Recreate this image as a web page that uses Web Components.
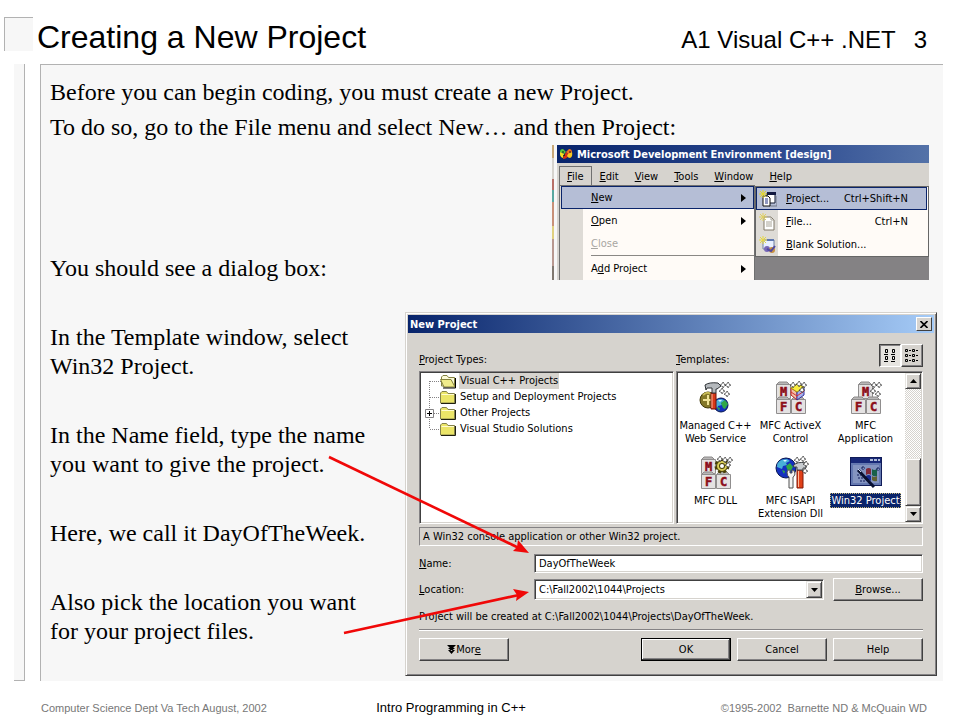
<!DOCTYPE html>
<html lang="en">
<head>
<meta charset="utf-8">
<title>Creating a New Project</title>
<style>
  body {
    margin: 0;
    background: #fff;
    color: #000;
    font-family: "Liberation Sans", Arial, sans-serif;
  }
</style>
</head>
<body>

<lecture-slide>
  <h1 slot="title">Creating a New Project</h1>
  <span slot="course">A1 Visual C++ .NET</span>
  <span slot="number">3</span>

  <p slot="intro">Before you can begin coding, you must create a new Project.</p>
  <p slot="intro">To do so, go to the File menu and select New… and then Project:</p>

  <p slot="steps">You should see a dialog box:</p>
  <p slot="steps">In the Template window, select Win32 Project.</p>
  <p slot="steps">In the Name field, type the name you want to give the project.</p>
  <p slot="steps">Here, we call it DayOfTheWeek.</p>
  <p slot="steps">Also pick the location you want for your project files.</p>

  <ide-menu slot="figures"></ide-menu>
  <project-dialog slot="figures"></project-dialog>

  <span slot="foot-left">Computer Science Dept Va Tech August, 2002</span>
  <span slot="foot-center">Intro Programming in C++</span>
  <span slot="foot-right">©1995-2002&nbsp; Barnette ND &amp; McQuain WD</span>
</lecture-slide>

<script>
/* Slide frame: header, side rail, body panel, footer. */
class LectureSlide extends HTMLElement {
  constructor() {
    super();
    this.attachShadow({ mode: 'open' });
    this.shadowRoot.innerHTML = `<style>
  :host {
    display: grid;
    grid-template-rows: 64px 1fr 39px;
    min-height: 100vh;
  }

/* Header */
  header {
    display: flex;
    align-items: baseline;
    padding: 17px 33px 0 4px;
    font-size: 24px;
  }
  .corner {
    align-self: flex-start;
    box-sizing: border-box;
    width: 29px;
    height: 34px;
    margin-right: 4px;
    background: #f7f7f7;
    border: 1px solid #b2b2b2;
    border-right: none;
    border-bottom: none;
  }
  ::slotted(h1) {
    flex: 1;
    margin: 0;
    font-size: 32px;
    line-height: 40px;
    font-weight: 400;
  }
  .number {
    margin-left: 18px;
  }

/* Body */
  .content {
    display: flex;
    gap: 15px;
    padding: 0 17px 0 14px;
  }
  .rail {
    box-sizing: border-box;
    width: 11px;
    background: #f7f7f7;
    border: 1px solid #b2b2b2;
    border-top: none;
    border-left: none;
  }
  .panel {
    flex: 1;
    position: relative;
    padding: 13px 6px 4px 9px;
    background: #f7f7f7;
    border: 1px solid #b2b2b2;
    border-right: none;
    border-bottom: none;
    font: 24px/29px "Liberation Serif", "Times New Roman", serif;
  }
  ::slotted(p) {
    margin: 0;
  }
  .intro {
    display: grid;
    gap: 6px;
  }
  .columns {
    display: grid;
    grid-template-columns: minmax(0, 1fr) auto;
    gap: 30px;
  }
  .steps {
    display: flex;
    flex-direction: column;
    gap: 40px;
    padding-top: 112px;
  }
  .figures {
    display: flex;
    flex-direction: column;
    align-items: flex-end;
    gap: 32px;
    padding-top: 3px;
  }

/* Arrows drawn over the text and the dialog. */
  .arrows {
    position: absolute;
    inset: 0;
    width: 100%;
    height: 100%;
    pointer-events: none;
  }
  .arrows line {
    stroke: #f00808;
    stroke-width: 2.6;
  }
  .arrows path {
    fill: #f00808;
  }

/* Footer */
  footer {
    display: grid;
    grid-template-columns: 8fr auto 9fr;
    align-items: center;
    padding: 14px 33px 0 41px;
    font-size: 11px;
    color: #777;
  }
  .center {
    padding-right: 24px;
    font-size: 13px;
    color: #000;
  }
  .right {
    text-align: right;
  }
</style>

<header>
  <div class="corner"></div>
  <slot name="title"></slot>
  <slot name="course"></slot>
  <div class="number"><slot name="number"></slot></div>
</header>

<div class="content">
  <div class="rail"></div>
  <main class="panel">
    <div class="intro"><slot name="intro"></slot></div>
    <div class="columns">
      <div class="steps"><slot name="steps"></slot></div>
      <div class="figures"><slot name="figures"></slot></div>
    </div>
    <svg class="arrows" aria-hidden="true">
      <line x1="288" y1="392" x2="478" y2="483"/>
      <path d="M488 488 L472 486 L476 482 L477 475 Z"/>
      <line x1="303" y1="568" x2="478" y2="530"/>
      <path d="M488 527 L472 524 L476 530 L475 536 Z"/>
    </svg>
  </main>
</div>

<footer>
  <div><slot name="foot-left"></slot></div>
  <div class="center"><slot name="foot-center"></slot></div>
  <div class="right"><slot name="foot-right"></slot></div>
</footer>
`;
  }
}
customElements.define('lecture-slide', LectureSlide);

/* One row of a drop-down menu. Attributes: active, disabled, submenu, shortcut. */
class MenuRow extends HTMLElement {
  constructor() {
    super();
    this.attachShadow({ mode: 'open' });
    const shortcut = this.getAttribute('shortcut') || '';
    const off = this.hasAttribute('disabled') ? 'disabled' : '';
    const arrow = this.hasAttribute('submenu')
      ? '<svg width="5" height="8" viewBox="0 0 5 8"><path d="M0 0 L5 4 L0 8 Z"/></svg>'
      : '';
    this.shadowRoot.innerHTML = `<style>
  :host {
    display: block;
  }
  button {
    display: grid;
    grid-template-columns: 22px 1fr auto;
    align-items: center;
    box-sizing: border-box;
    width: 100%;
    height: 23px;
    padding: 0 7px 0 0;
    border: 1px solid transparent;
    background: linear-gradient(to right, #dedbd6 22px, #fffbf7 22px) border-box;
    color: #000;
    font: inherit;
    text-align: left;
  }
  button:disabled {
    color: #a8a6a2;
  }
  :host([active]) button {
    background: #b5bed6;
    border-color: #0a246a;
  }
  .icon {
    display: grid;
    place-items: center;
  }
  .text {
    padding-left: 7px;
  }
  .shortcut {
    padding-right: 11px;
  }
</style>
<button type="button" ${off}>
  <span class="icon"><slot name="icon"></slot></span>
  <span class="text"><slot></slot></span>
  ${shortcut ? `<span class="shortcut">${shortcut}</span>` : arrow}
</button>`;
  }
}
customElements.define('menu-row', MenuRow);

/* Development environment window with File > New opened. */
class IdeMenu extends HTMLElement {
  constructor() {
    super();
    this.attachShadow({ mode: 'open' });
    this.shadowRoot.innerHTML = `<style>
  :host {
    display: flex;
    width: 377px;
    height: 135px;
    margin-right: 8px;
    overflow: hidden;
    font: 11px/13px "DejaVu Sans Condensed", Tahoma, sans-serif;
  }
  .edge {
    width: 2px;
    margin-right: 3px;
    background: linear-gradient(#c8a878 0 10%, #d6d3ce 10% 25%, #b87068 25% 33%, #58a8a0 33% 42%,
      #c89078 42% 60%, #e0d080 60% 70%, #b89890 70% 90%, #807870 90%);
  }
  .window {
    flex: 1;
    display: flex;
    flex-direction: column;
    background: #d6d3ce;
  }
  .title {
    display: flex;
    align-items: center;
    gap: 4px;
    height: 18px;
    padding-left: 2px;
    background: linear-gradient(to right, #08246b, #2c4a90 60%, #5472a8);
    color: #fff;
    font-weight: 700;
  }
  nav {
    display: flex;
    height: 22px;
    padding: 3px 0 0 2px;
    box-sizing: border-box;
  }
  nav button {
    padding: 0 7px;
    border: 1px solid transparent;
    border-bottom: none;
    background: none;
    font: inherit;
  }
  nav .open {
    border-color: #707070;
  }
  .area {
    flex: 1;
    display: flex;
    align-items: stretch;
    min-height: 0;
    padding-left: 2px;
  }
  .menu {
    box-sizing: border-box;
    width: 196px;
    border: 1px solid #707070;
    border-bottom: none;
    padding-left: 1px;
    background: linear-gradient(to right, #dedbd6 23px, #fffbf7 23px);
  }
  .rule {
    height: 1px;
    margin: 0 0 1px 30px;
    background: #8a8885;
  }
  .workspace {
    flex: 1;
    padding-top: 1px;
    background: linear-gradient(#d6d3ce 1px, #848284 1px);
  }
  .submenu {
    border: 1px solid #666;
    padding-right: 1px;
    background: #fffbf7;
  }
</style>

<div class="edge"></div>
<div class="window">
  <div class="title">
    <svg width="14" height="12" viewBox="0 0 14 12">
      <path d="M1 4 Q1 1 4 1 L7 4 L5 6 Z" fill="#58c838"/>
      <path d="M7 4 L10 1 Q13 1 13 4 L10 7 Z" fill="#f07020"/>
      <path d="M1 4 L5 6 L4 10 Q1 9 1 6 Z" fill="#f8e020"/>
      <path d="M4 10 L7 4 L10 7 Q8 11 4 11 Z" fill="#d83010"/>
      <path d="M9 6 L13 4 Q14 9 11 10 Q9 10 8 8 Z" fill="#f8c820"/>
      <path d="M3 4 H5 M10 4 H12 M4 8 L6 7" stroke="#181818"/>
    </svg>
    <span>Microsoft Development Environment [design]</span>
  </div>
  <nav>
    <button type="button" class="open"><u>F</u>ile</button>
    <button type="button"><u>E</u>dit</button>
    <button type="button"><u>V</u>iew</button>
    <button type="button"><u>T</u>ools</button>
    <button type="button"><u>W</u>indow</button>
    <button type="button"><u>H</u>elp</button>
  </nav>
  <div class="area">
    <div class="menu">
      <menu-row active submenu><u>N</u>ew</menu-row>
      <menu-row submenu><u>O</u>pen</menu-row>
      <menu-row disabled><u>C</u>lose</menu-row>
      <div class="rule"></div>
      <menu-row submenu>A<u>d</u>d Project</menu-row>
    </div>
    <div class="workspace">
      <div class="submenu">
        <menu-row active shortcut="Ctrl+Shift+N">
          <svg slot="icon" width="18" height="18" viewBox="0 0 18 18">
            <path d="M8 3 H16 V13 H8 Z" fill="#fff" stroke="#101830"/>
            <path d="M8 2 H17 V5 H8 Z" fill="#101840"/>
            <path d="M10 16 H18 V6" fill="none" stroke="#707888"/>
            <path d="M4 6 H9 L11 8 V16 H4 Z" fill="#fff" stroke="#101010"/>
            <path d="M6 9 H9 M6 11 H9 M6 13 H9" stroke="#203080"/>
            <path d="M4 0 V8 M0 4 H8 M1 1 L7 7 M7 1 L1 7" stroke="#e8d820"/>
          </svg><u>P</u>roject...</menu-row>
        <menu-row shortcut="Ctrl+N">
          <svg slot="icon" width="18" height="18" viewBox="0 0 18 18">
            <path d="M5 4 H12 L15 7 V17 H5 Z" fill="#fff" stroke="#807868"/>
            <path d="M12 4 V7 H15 M7 9 H13 M7 11 H13 M7 13 H13" fill="none" stroke="#a8a498"/>
            <path d="M4 0 V8 M0 4 H8 M1 1 L7 7 M7 1 L1 7" stroke="#e0d060"/>
          </svg><u>F</u>ile...</menu-row>
        <menu-row>
          <svg slot="icon" width="18" height="18" viewBox="0 0 18 18">
            <path d="M4 4 H15 V13 H4 Z" fill="#e8f0ff" stroke="#7080a0"/>
            <path d="M8 3 H15 V5 H8 Z" fill="#6078b0"/>
            <circle cx="8" cy="13" r="3" fill="#7868b8"/>
            <circle cx="13" cy="14" r="3" fill="#c89040"/>
            <path d="M8 13 L12 15 L16 10" fill="none" stroke="#5048a0" stroke-width="2"/>
            <path d="M4 0 V8 M0 4 H8 M1 1 L7 7 M7 1 L1 7" stroke="#e8d840"/>
          </svg><u>B</u>lank Solution...</menu-row>
      </div>
    </div>
  </div>
</div>`;
  }
}
customElements.define('ide-menu', IdeMenu);

/* Raised push button. */
class PushButton extends HTMLElement {
  constructor() {
    super();
    this.attachShadow({ mode: 'open' });
    this.shadowRoot.innerHTML = `<style>
  :host {
    display: block;
    width: 90px;
  }
  button {
    display: flex;
    align-items: center;
    justify-content: center;
    box-sizing: border-box;
    width: 100%;
    height: 23px;
    padding: 0;
    border: 1px solid;
    border-color: #fff #404040 #404040 #fff;
    box-shadow: inset -1px -1px #848284;
    background: #d6d3ce;
    color: #000;
    font: inherit;
  }
  :host([default]) button {
    border-color: #000;
    box-shadow: inset -1px -1px #404040, inset 1px 1px #fff, inset -2px -2px #848284;
  }
</style>
<button type="button"><slot></slot></button>`;
  }
}
customElements.define('push-button', PushButton);

/* Entry of the project types tree. Attributes: first, last, selected, expandable. */
class TreeEntry extends HTMLElement {
  constructor() {
    super();
    this.attachShadow({ mode: 'open' });
    const open = this.hasAttribute('selected');
    const top = this.hasAttribute('first') ? 8 : 0;
    const bottom = this.hasAttribute('last') ? 8 : 16;
    const box = this.hasAttribute('expandable')
      ? '<path d="M4.5 4.5 h8 v8 h-8 Z" fill="#fff" stroke="#848284"/><path d="M6 8.5 H11 M8.5 6 V11" stroke="#000"/>'
      : '';
    const folder = open
      ? '<path d="M20.5 13 V4 L22 2.5 H26 L27.5 4.5 H33.5 V13 Z" fill="#fbfad8" stroke="#848240"/><path d="M19.5 6.5 H30 L34 14 H23 Z" fill="#f0ec8c" stroke="#84823c"/><path d="M22 15 H34.5 V5" fill="none" stroke="#000"/>'
      : '<path d="M19.5 14 V4 L21 2.5 H25.5 L27 4.5 H33.5 V14 Z" fill="#ebe568" stroke="#84824c"/><path d="M20.5 5.5 H33" stroke="#fffcd0"/><path d="M20 14.5 H34.5 V5" fill="none" stroke="#202010"/>';
    this.shadowRoot.innerHTML = `<style>
  :host {
    display: flex;
    height: 16px;
  }
  span {
    padding: 1px 1px 2px;
  }
  :host([selected]) span {
    background: #d6d3ce;
  }
</style>
<svg width="38" height="16" viewBox="0 0 38 16" aria-hidden="true">
  <path d="M8.5 ${top} V${bottom} M9 8.5 H20" stroke="#848284" stroke-dasharray="1 1"/>
  ${box}${folder}
</svg><span><slot></slot></span>`;
  }
}
customElements.define('tree-entry', TreeEntry);

/* Pictures of the template list, 32 by 32. */
const star = (x, y) => `
  <path d="M${x} ${y - 3} L${x + 1} ${y - 1} L${x + 3} ${y} L${x + 1} ${y + 1} L${x} ${y + 3} L${x - 1} ${y + 1} L${x - 3} ${y} L${x - 1} ${y - 1} Z"
    fill="#fff" stroke="#181818" stroke-width=".8" stroke-dasharray="1.4 .6"/>`;
const sparkles = (x, y) => star(x + 2, y + 3) + star(x + 7, y + 3) + star(x + 1, y + 9) + star(x + 6, y + 12);

/* Lettered cube. */
const cube = (x, y, letter) => `
  <path d="M${x} ${y + 2} l3 -3 h8 l3 3 Z" fill="#b8b6b6" stroke="#8c8a8a"/>
  <path d="M${x + 0.5} ${y + 1.5} h14 v14 h-14 Z" fill="#e4e2e2" stroke="#908e8e"/>
  <text x="${x + 7.5}" y="${y + 13}" text-anchor="middle" font-size="12" font-weight="700"
    font-family="DejaVu Sans Mono, monospace" fill="#8c0c18" stroke="#8c0c18" stroke-width=".5">${letter}</text>`;

const globe = (x, y, r) => `
  <circle cx="${x}" cy="${y}" r="${r}" fill="#1430c0" stroke="#081850"/>
  <path d="M${x - r + 1} ${y - 1} q0 -${r - 2} ${r} -${r - 2} l3 2 l-4 2 l1 2 l-4 1 l-1 3 Z" fill="#48b0d8"/>
  <path d="M${x} ${y - 2} l4 -3 l3 4 l-3 5 l-2 -1 Z M${x - 4} ${y + 2} l3 1 l-1 3 Z" fill="#30a848"/>
  <path d="M${x - 3} ${y - r + 2} l4 0 l-2 2 Z" fill="#d8f4ff"/>`;

const PICTURES = {
  managed: `
    <circle cx="8" cy="18" r="8" fill="#847828" stroke="#403808"/>
    <path d="M3 13 q4 -4 8 -1" fill="none" stroke="#c8bc58" stroke-width="2"/>
    <path d="M8 13 V23 M3 18 H13" stroke="#f0e498" stroke-width="2"/>
    ${globe(21, 23, 7)}
    <path d="M11 11 h5 v16 h-5 Z" fill="#d83818" stroke="#701008"/>
    <path d="M12 12 v14" stroke="#ffb898"/>
    <path d="M5 3 Q9 0 18 1 L21 4 L17 7 H16 V11 H12 V6 H7 L6 8 Z" fill="#b4b8bc" stroke="#303438"/>
    ${sparkles(21, 0)}`,
  activex: `${cube(1, 1, 'M')}${cube(1, 16, 'F')}${cube(16, 16, 'C')}
    <path d="M16 6 L22 10 V18 L16 13 Z" fill="#f0c0a8" stroke="#c02020"/>
    <path d="M22 10 L29 5 V13 L22 18 Z" fill="#a8b0e8" stroke="#3030a0"/>
    <path d="M16 6 L22 2 L29 5 L22 10 Z" fill="#f8ec40" stroke="#a89810"/>
    <path d="M16 10 L22 14 L29 9" fill="none" stroke="#d83030"/>
    ${star(18, 3)}${star(24, 2)}${star(29, 3)}${star(27, 8)}`,
  application: `${cube(8, 1, 'M')}${cube(1, 16, 'F')}${cube(16, 16, 'C')}${sparkles(22, 0)}`,
  dll: `${cube(1, 1, 'M')}${cube(1, 16, 'F')}${cube(16, 16, 'C')}
    <circle cx="22" cy="9" r="6" fill="none" stroke="#484008" stroke-width="3" stroke-dasharray="3 2"/>
    <circle cx="22" cy="9" r="4" fill="#fff" stroke="#484008" stroke-width="4"/>
    <circle cx="22" cy="9" r="4" fill="none" stroke="#d8cc58" stroke-width="2"/>
    ${star(20, 2)}${star(25, 3)}${star(30, 3)}${star(28, 8)}`,
  isapi: `${globe(11, 11, 10)}
    <path d="M12 15 q1 -3 3 -2 v3 h2 v-3 q3 0 3 4 q-1 3 -2 3 v11 h-4 V20 q-2 -1 -2 -5 Z" fill="#f4f4f4" stroke="#505050"/>
    <path d="M22 13 h6 v18 h-6 Z" fill="#e04018" stroke="#801808"/>
    <path d="M23.5 14 v16" stroke="#ffb898"/>
    <path d="M18 9 Q22 4 31 6 V11 H28 V13 H22 V10 H19 Z" fill="#c8ccd0" stroke="#404448"/>
    ${star(22, 3)}${star(28, 2)}${star(31, 7)}${star(30, 14)}`,
  win32: `
    <rect x=".5" y=".5" width="31" height="28" fill="#6478b0" stroke="#101c58"/>
    <path d="M1 1 H31 V6 H1 Z" fill="#182878"/>
    <path d="M20 3 h3 m1 0 h3 m1 0 h2" stroke="#b0bcd8" stroke-width="2"/>
    <path d="M3 8 H29 V26 H3 Z" fill="#8494c0"/>
    <path d="M16 12 q3 -2 5 0 v6 q-2 -2 -5 0 Z" fill="#802838"/>
    <path d="M22 12 q2 2 5 0 v7 q-3 1 -5 -1 Z" fill="#186048"/>
    <path d="M16 19 q3 -2 5 0 v5 q-2 -2 -5 0 Z" fill="#182c90"/>
    <path d="M22 19 q2 2 5 0 v5 q-3 1 -5 -1 Z" fill="#606030"/>
    <path d="M8 13 L24 30" stroke="#081030" stroke-width="3"/>
    <path d="M8 12 L11 15" stroke="#c8d4f0"/>
    <path d="M7 18 h4 M8 21 h6 M10 24 h5 M28 10 v4 M26 12 h4 M13 9 v4 M11 11 h4" stroke="#101c58" stroke-dasharray="2 1"/>`
};

/* Icon with a caption in the template list. Attributes: picture, selected. */
class TemplateIcon extends HTMLElement {
  constructor() {
    super();
    this.attachShadow({ mode: 'open' });
    this.shadowRoot.innerHTML = `<style>
  :host {
    display: flex;
    flex-direction: column;
    align-items: center;
    gap: 4px;
    text-align: center;
    white-space: nowrap;
  }
  svg {
    overflow: visible;
  }
  span {
    border: 1px solid transparent;
  }
  :host([selected]) span {
    background: #0a246a;
    border: 1px dotted #c8b878;
    color: #fff;
  }
</style>
<svg width="32" height="32" viewBox="0 0 32 32" aria-hidden="true">${PICTURES[this.getAttribute('picture')]}</svg>
<span><slot></slot></span>`;
  }
}
customElements.define('template-icon', TemplateIcon);

/* New Project dialog box. */
class ProjectDialog extends HTMLElement {
  constructor() {
    super();
    this.attachShadow({ mode: 'open' });
    this.shadowRoot.innerHTML = `<style>
  :host {
    display: block;
    box-sizing: border-box;
    width: 532px;
    padding: 2px;
    border: 1px solid;
    border-color: #d6d3ce #404040 #404040 #d6d3ce;
    box-shadow: inset 1px 1px #fff, inset -1px -1px #848284;
    background: #d6d3ce;
    font: 11px/13px "DejaVu Sans Condensed", Tahoma, sans-serif;
  }
  .title {
    display: flex;
    align-items: center;
    justify-content: space-between;
    height: 18px;
    padding: 0 2px;
    background: linear-gradient(to right, #08246b, #a5cbf7);
    color: #fff;
    font-weight: 700;
  }
  .close {
    display: grid;
    place-items: center;
    width: 16px;
    height: 14px;
    padding: 0;
    border: 1px solid;
    border-color: #fff #404040 #404040 #fff;
    background: #d6d3ce;
  }
  form {
    padding: 11px 11px 12px;
  }

/* Labels over the lists, with the two view switches. */
  .heads {
    display: grid;
    grid-template-columns: 257px 1fr auto auto;
    height: 23px;
    margin-bottom: 4px;
  }
  .heads span {
    padding-top: 9px;
  }
  .view {
    display: grid;
    place-items: center;
    width: 22px;
    height: 23px;
    padding: 0;
    border: 1px solid;
    border-color: #fff #404040 #404040 #fff;
    box-shadow: inset -1px -1px #848284;
    background: #d6d3ce;
  }
  .view.on {
    border-color: #404040 #fff #fff #404040;
    box-shadow: inset 1px 1px #848284;
    background: #e6e4e0;
  }

  .sunken {
    box-sizing: border-box;
    border: 1px solid;
    border-color: #848284 #fff #fff #848284;
    box-shadow: inset 1px 1px #404040, inset -1px -1px #d6d3ce;
    background: #fff;
  }
  .lists {
    display: grid;
    grid-template-columns: 255px 1fr;
    gap: 2px;
    height: 153px;
  }
  .tree {
    padding: 1px;
  }
  .templates {
    display: grid;
    grid-template-columns: 1fr 16px;
    padding: 1px;
  }
  .icons {
    display: grid;
    grid-template-columns: repeat(3, 75px);
    grid-auto-rows: 75px;
    padding-top: 9px;
    box-sizing: border-box;
    height: 149px;
    overflow: hidden;
  }

/* Scroll bar */
  .scroll {
    display: grid;
    grid-template-rows: 16px 1fr 48px 16px;
    background: repeating-conic-gradient(#fff 0 25%, #d6d3ce 0 50%) 0 0 / 2px 2px;
  }
  .scroll button,
  .scroll .thumb,
  .drop {
    display: grid;
    place-items: center;
    box-sizing: border-box;
    padding: 0;
    border: 1px solid;
    border-color: #e8e6e2 #404040 #404040 #e8e6e2;
    box-shadow: inset 1px 1px #fff, inset -1px -1px #848284;
    background: #d6d3ce;
  }
  .scroll .thumb {
    grid-row: 3;
  }
  .scroll .down {
    grid-row: 4;
  }

  .description {
    height: 19px;
    margin: 3px 0 8px;
    padding: 2px 3px;
    box-sizing: border-box;
    border: 1px solid;
    border-color: #848284 #fff #fff #848284;
  }

/* Name and location */
  .fields {
    display: grid;
    grid-template-columns: 115px 1fr 90px;
    row-gap: 5px;
    align-items: center;
  }
  input,
  select {
    width: 100%;
    padding: 0 4px;
    color: #000;
    font: inherit;
    border-radius: 0;
    outline: none;
  }
  input {
    grid-column: span 2;
    height: 19px;
  }
  .combo {
    display: grid;
    grid-template-columns: 1fr 16px;
    height: 21px;
    margin-right: 9px;
    padding: 1px;
  }
  select {
    appearance: none;
    padding: 0 3px;
    border: none;
    background: #fff;
  }
  .drop {
    pointer-events: none;
  }
  .result {
    margin: 9px 0 6px;
  }
  .line {
    height: 1px;
    margin-bottom: 7px;
    border-top: 1px solid #848284;
    background: #fff;
  }
  .actions {
    display: flex;
    gap: 6px;
  }
  .more {
    margin-right: auto;
  }
</style>

<div class="title">
  <span>New Project</span>
  <button type="button" class="close" aria-label="Close">
    <svg width="8" height="7" viewBox="0 0 8 7"><path d="M.5 0 L7.5 7 M7.5 0 L.5 7" stroke="#000" stroke-width="1.6"/></svg>
  </button>
</div>

<form>
  <div class="heads">
    <span><u>P</u>roject Types:</span>
    <span><u>T</u>emplates:</span>
    <button type="button" class="view on" aria-label="Large icons">
      <svg width="12" height="13" viewBox="0 0 12 13" fill="none" stroke="#000">
        <path d="M1.5 .5 h2 v3 h-2 Z M8.5 .5 h2 v3 h-2 Z M1.5 7.5 h2 v3 h-2 Z M8.5 7.5 h2 v3 h-2 Z M0 5.5 h4 M7 5.5 h4 M0 12.5 h4 M7 12.5 h4"/>
      </svg>
    </button>
    <button type="button" class="view" aria-label="Small icons">
      <svg width="14" height="13" viewBox="0 0 14 13" fill="none" stroke="#000">
        <path d="M.5 .5 h2 v2 h-2 Z M7.5 .5 h2 v2 h-2 Z M.5 5.5 h2 v2 h-2 Z M7.5 5.5 h2 v2 h-2 Z M.5 10.5 h2 v2 h-2 Z M7.5 10.5 h2 v2 h-2 Z M4 1.5 h2 M11 1.5 h2 M4 6.5 h2 M11 6.5 h2 M4 11.5 h2 M11 11.5 h2"/>
      </svg>
    </button>
  </div>

  <div class="lists">
    <div class="sunken tree">
      <tree-entry first selected>Visual C++ Projects</tree-entry>
      <tree-entry>Setup and Deployment Projects</tree-entry>
      <tree-entry expandable>Other Projects</tree-entry>
      <tree-entry last>Visual Studio Solutions</tree-entry>
    </div>
    <div class="sunken templates">
      <div class="icons">
        <template-icon picture="managed">Managed C++<br>Web Service</template-icon>
        <template-icon picture="activex">MFC ActiveX<br>Control</template-icon>
        <template-icon picture="application">MFC<br>Application</template-icon>
        <template-icon picture="dll">MFC DLL</template-icon>
        <template-icon picture="isapi">MFC ISAPI<br>Extension Dll</template-icon>
        <template-icon picture="win32" selected>Win32 Project</template-icon>
      </div>
      <div class="scroll">
        <button type="button" aria-label="Scroll up"><svg width="7" height="4" viewBox="0 0 7 4"><path d="M0 4 L3.5 0 L7 4 Z"/></svg></button>
        <div class="thumb"></div>
        <button type="button" class="down" aria-label="Scroll down"><svg width="7" height="4" viewBox="0 0 7 4"><path d="M0 0 L3.5 4 L7 0 Z"/></svg></button>
      </div>
    </div>
  </div>

  <div class="description">A Win32 console application or other Win32 project.</div>

  <div class="fields">
    <label for="name"><u>N</u>ame:</label>
    <input id="name" class="sunken" type="text" value="DayOfTheWeek">
    <label for="location"><u>L</u>ocation:</label>
    <div class="sunken combo">
      <select id="location"><option>C:\\Fall2002\\1044\\Projects</option></select>
      <span class="drop"><svg width="7" height="4" viewBox="0 0 7 4"><path d="M0 0 L3.5 4 L7 0 Z"/></svg></span>
    </div>
    <push-button><span><u>B</u>rowse...</span></push-button>
  </div>

  <div class="result">Project will be created at C:\\Fall2002\\1044\\Projects\\DayOfTheWeek.</div>
  <div class="line"></div>

  <div class="actions">
    <push-button class="more">
      <svg width="9" height="9" viewBox="0 0 9 9"><path d="M0 0 H9 L6 3 H8 L4.5 6 L1 3 H3 Z M1 5 L4.5 9 L8 5 Z"/></svg><span>Mor<u>e</u></span>
    </push-button>
    <push-button default>OK</push-button>
    <push-button>Cancel</push-button>
    <push-button>Help</push-button>
  </div>
</form>`;
  }
}
customElements.define('project-dialog', ProjectDialog);
</script>
</body>
</html>
